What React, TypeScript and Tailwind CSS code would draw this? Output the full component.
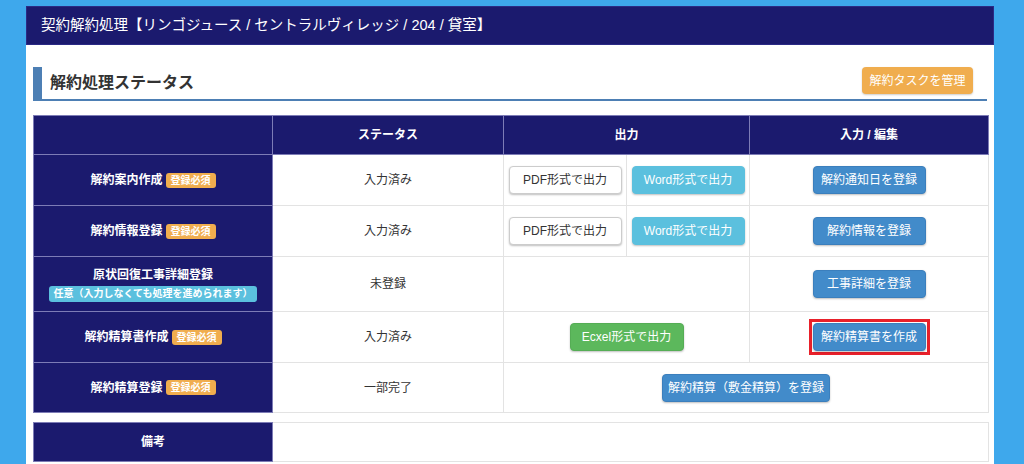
import React from 'react';

const font = { fontFamily: '"Liberation Sans", "Noto Sans CJK JP", sans-serif' };

const Badge: React.FC<{ children: React.ReactNode; tone?: 'orange' | 'cyan' }> = ({ children, tone = 'orange' }) => (
  <span
    className={
      tone === 'orange'
        ? 'inline-block rounded-[3px] bg-[#f0ad4e] px-[5px] text-[10px] leading-[15px] font-bold text-white'
        : 'inline-block rounded-[3px] bg-[#5bc0de] px-[4px] text-[10px] leading-[16px] font-bold text-white'
    }
  >
    {children}
  </span>
);

const Btn: React.FC<{ children: React.ReactNode; kind: 'default' | 'info' | 'primary' | 'success'; w?: string }> = ({
  children,
  kind,
  w = 'w-[113px]',
}) => {
  const styles: Record<string, string> = {
    default: 'bg-white border border-[#cccccc] text-[#333333]',
    info: 'bg-[#5bc0de] border border-[#5bc0de] text-white',
    primary: 'bg-[#428bca] border border-[#3b7fbd] text-white',
    success: 'bg-[#5cb85c] border border-[#55ad55] text-white',
  };
  return (
    <button
      className={`${styles[kind]} ${w} inline-flex h-[28px] items-center justify-center rounded-[4px] text-[12px] shadow-[0_1px_2px_rgba(0,0,0,0.25)]`}
    >
      {children}
    </button>
  );
};

const th = 'border border-[#7d7cb6] bg-[#1b1a6e] text-[12px] font-bold text-white text-center';
const labelCell = 'border border-[#7d7cb6] bg-[#1b1a6e] text-[12px] font-bold text-white text-center';
const td = 'border border-[#e3e3e3] bg-white text-[12px] text-[#333333] text-center';

const Label: React.FC<{ text: string }> = ({ text }) => (
  <span className="inline-flex items-center gap-[3px]">
    <span>{text}</span>
    <Badge>登録必須</Badge>
  </span>
);

export default function App() {
  return (
    <div className="min-h-[464px] bg-[#3ea8ec] pt-[6px]" style={font}>
      <div className="ml-[26px] w-[968px] bg-white pb-[4px]">
        <div className="flex h-[39px] items-center border border-[#2b2a85] bg-[#1b1a6e] pl-[14px] text-[14.5px] text-white">
          契約解約処理【リンゴジュース / セントラルヴィレッジ / 204 / 貸室】
        </div>

        <div className="px-[7px] pt-[22px]">
          <div className="flex h-[34px] items-center justify-between border-b-2 border-[#4d7fb4]">
            <div className="flex h-full items-center border-l-[9px] border-[#4d7fb4] pl-[8px] text-[16px] font-bold text-[#333333]">
              解約処理ステータス
            </div>
            <button className="mr-[14px] mb-[5px] h-[27px] w-[111px] rounded-[4px] bg-[#f0ad4e] text-[12px] text-white shadow-[0_1px_2px_rgba(0,0,0,0.2)]">
              解約タスクを管理
            </button>
          </div>

          <table className="mt-[14px] w-[955px] table-fixed border-collapse">
            <colgroup>
              <col className="w-[239px]" />
              <col className="w-[231px]" />
              <col className="w-[123px]" />
              <col className="w-[123px]" />
              <col className="w-[239px]" />
            </colgroup>
            <thead>
              <tr className="h-[39px]">
                <th className={th}></th>
                <th className={th}>ステータス</th>
                <th className={th} colSpan={2}>
                  出力
                </th>
                <th className={th}>入力 / 編集</th>
              </tr>
            </thead>
            <tbody>
              <tr className="h-[51px]">
                <td className={labelCell}>
                  <Label text="解約案内作成" />
                </td>
                <td className={td}>入力済み</td>
                <td className={td}>
                  <Btn kind="default">PDF形式で出力</Btn>
                </td>
                <td className={td}>
                  <Btn kind="info">Word形式で出力</Btn>
                </td>
                <td className={td}>
                  <Btn kind="primary">解約通知日を登録</Btn>
                </td>
              </tr>
              <tr className="h-[51px]">
                <td className={labelCell}>
                  <Label text="解約情報登録" />
                </td>
                <td className={td}>入力済み</td>
                <td className={td}>
                  <Btn kind="default">PDF形式で出力</Btn>
                </td>
                <td className={td}>
                  <Btn kind="info">Word形式で出力</Btn>
                </td>
                <td className={td}>
                  <Btn kind="primary">解約情報を登録</Btn>
                </td>
              </tr>
              <tr className="h-[55px]">
                <td className={labelCell}>
                  <div className="flex flex-col items-center gap-[2px]">
                    <span>原状回復工事詳細登録</span>
                    <Badge tone="cyan">任意（入力しなくても処理を進められます）</Badge>
                  </div>
                </td>
                <td className={td}>未登録</td>
                <td className={td} colSpan={2}></td>
                <td className={td}>
                  <Btn kind="primary">工事詳細を登録</Btn>
                </td>
              </tr>
              <tr className="h-[51px]">
                <td className={labelCell}>
                  <Label text="解約精算書作成" />
                </td>
                <td className={td}>入力済み</td>
                <td className={td} colSpan={2}>
                  <Btn kind="success" w="w-[114px]">
                    Ecxel形式で出力
                  </Btn>
                </td>
                <td className={td}>
                  <span className="inline-block border-[3px] border-[#e8202a] p-[1px]">
                    <Btn kind="primary">解約精算書を作成</Btn>
                  </span>
                </td>
              </tr>
              <tr className="h-[50px]">
                <td className={labelCell}>
                  <Label text="解約精算登録" />
                </td>
                <td className={td}>一部完了</td>
                <td className={td} colSpan={3}>
                  <Btn kind="primary" w="w-[168px]">
                    解約精算（敷金精算）を登録
                  </Btn>
                </td>
              </tr>
            </tbody>
          </table>

          <table className="mt-[9px] w-[955px] table-fixed border-collapse">
            <colgroup>
              <col className="w-[239px]" />
              <col className="w-[716px]" />
            </colgroup>
            <tbody>
              <tr className="h-[39px]">
                <td className={labelCell}>備考</td>
                <td className={td}></td>
              </tr>
            </tbody>
          </table>
        </div>
      </div>
    </div>
  );
}
